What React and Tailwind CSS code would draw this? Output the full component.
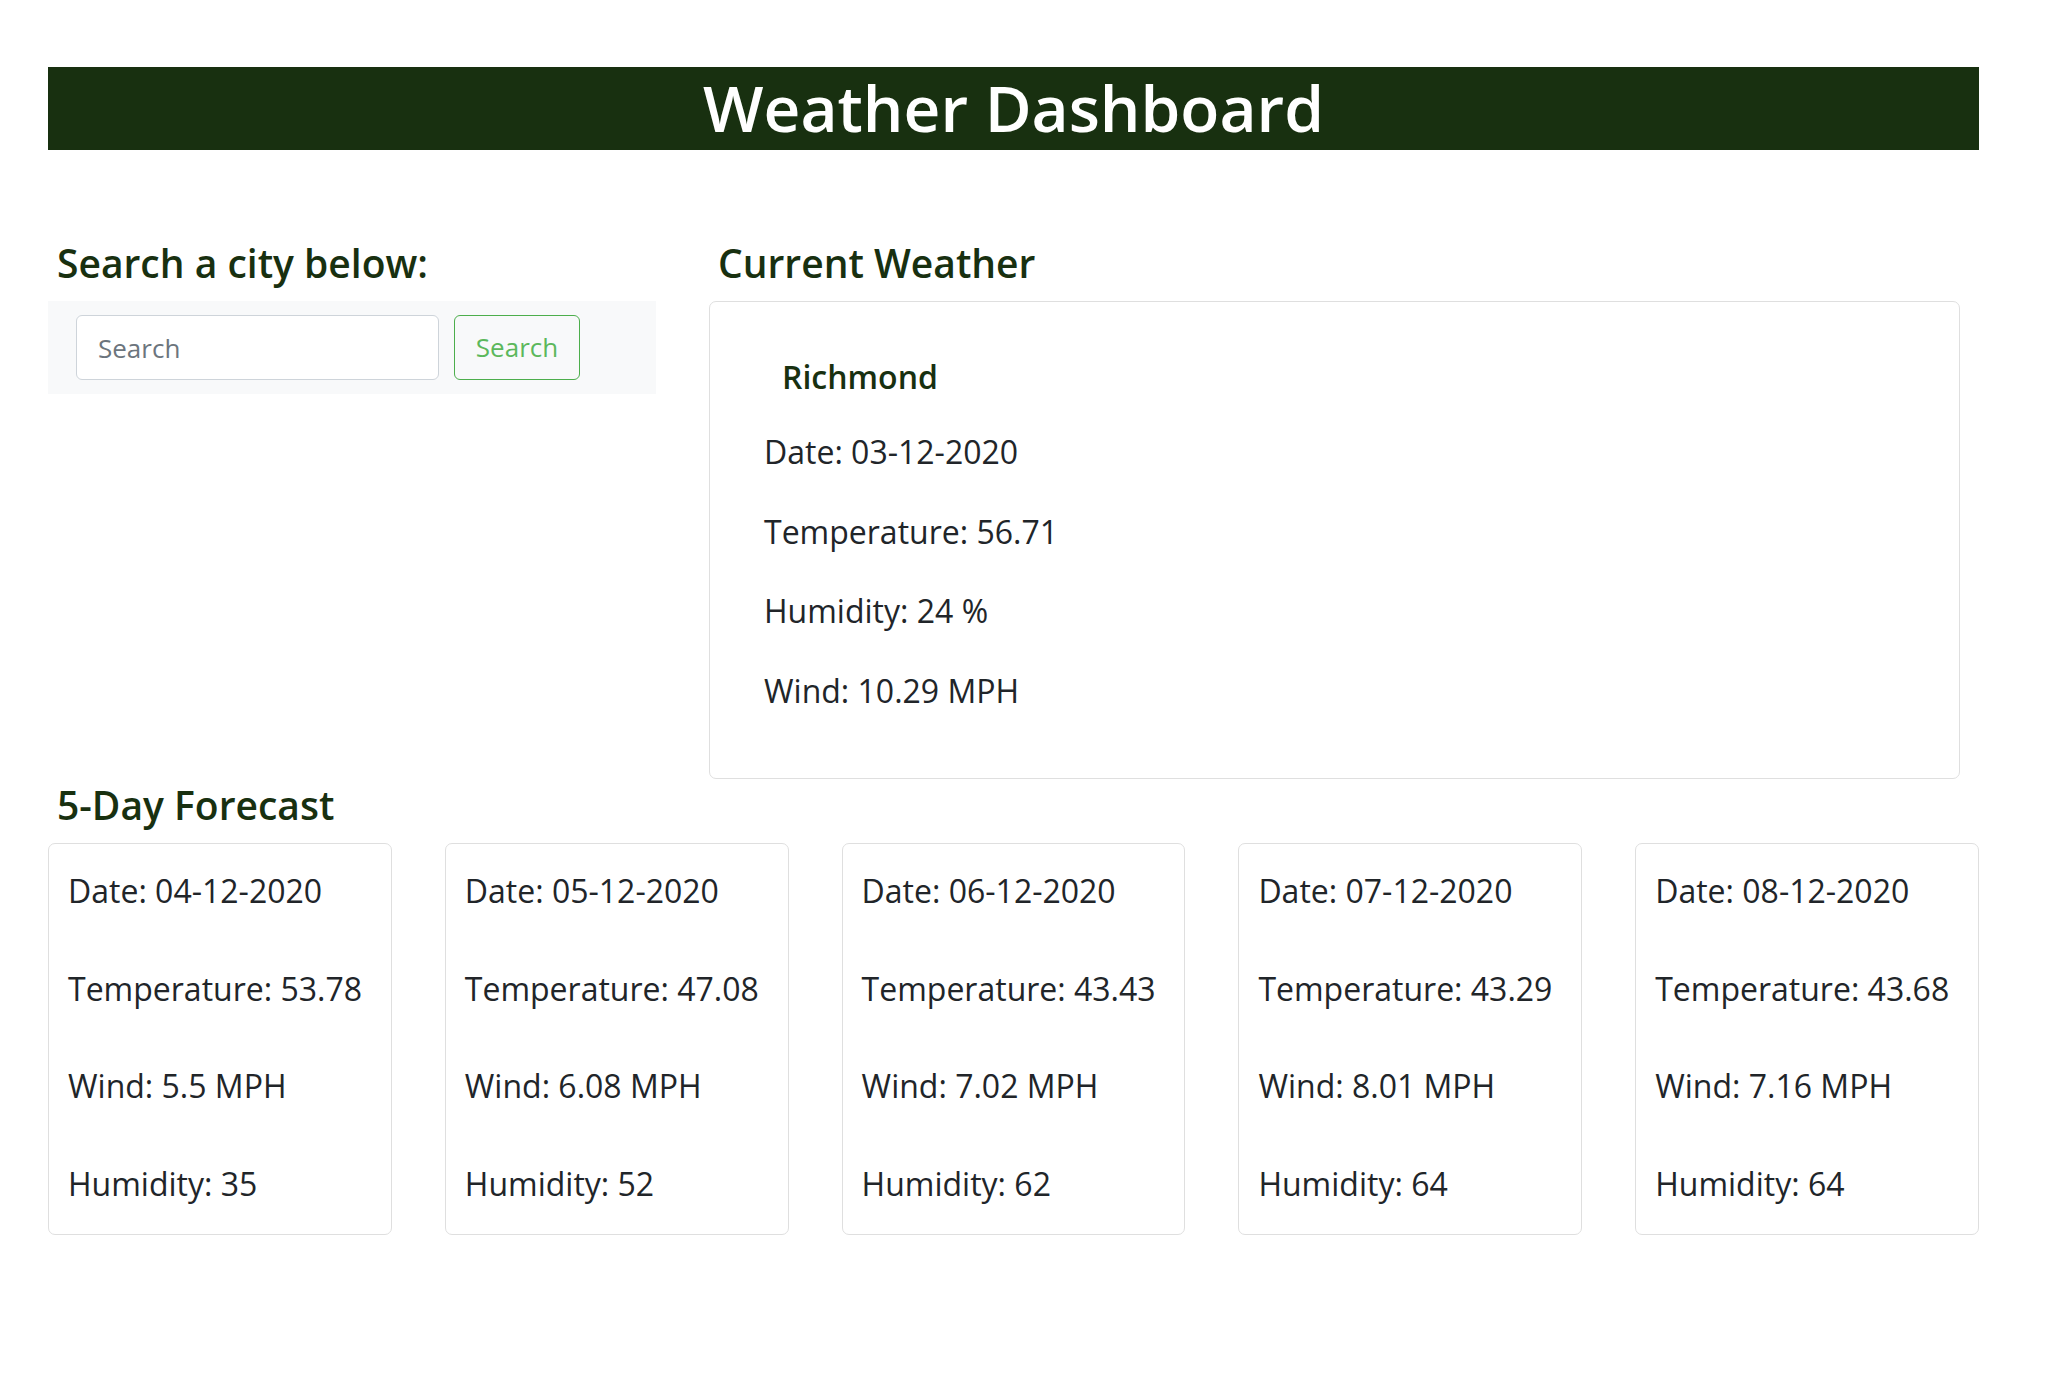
import React from "react";

const forecast = [
  { date: "04-12-2020", temp: "53.78", wind: "5.5", humidity: "35" },
  { date: "05-12-2020", temp: "47.08", wind: "6.08", humidity: "52" },
  { date: "06-12-2020", temp: "43.43", wind: "7.02", humidity: "62" },
  { date: "07-12-2020", temp: "43.29", wind: "8.01", humidity: "64" },
  { date: "08-12-2020", temp: "43.68", wind: "7.16", humidity: "64" },
];

const SectionTitle = ({ children }) => (
  <h2 className="mb-[14px] pl-[9px] text-[39px] font-semibold leading-[48px] text-[#183010]">
    {children}
  </h2>
);

const ForecastCard = ({ day }) => (
  <div className="flex flex-col gap-[48px] rounded-[7px] border border-[#dfdfdf] px-[19px] pt-[22px] pb-[26px] text-[32px] leading-[49.5px]">
    <p>Date: {day.date}</p>
    <p>Temperature: {day.temp}</p>
    <p>Wind: {day.wind} MPH</p>
    <p>Humidity: {day.humidity}</p>
  </div>
);

export default function App() {
  return (
    <div className="min-h-screen bg-white pt-[67px] pl-[48px] font-['Open_Sans',sans-serif] text-[#212529]">
      <div className="w-[1931px]">
        {/* Header */}
        <header className="h-[83px] bg-[#183010] text-center">
          <h1 className="text-[64px] font-semibold leading-[82px] text-white">
            Weather Dashboard
          </h1>
        </header>

        <div className="mt-[89px] flex">
          {/* Search */}
          <section className="w-[608px]">
            <SectionTitle>Search a city below:</SectionTitle>
            <div className="flex h-[93px] items-center gap-[15px] bg-[#f8f9fa] pl-[28px]">
              <input
                type="text"
                placeholder="Search"
                className="h-[65px] w-[363px] rounded-[6px] border border-[#ced4da] bg-white px-[21px] text-[26px] outline-none placeholder:text-[#6c757d]"
              />
              <button className="h-[65px] w-[126px] rounded-[6px] border border-[#4cae4c] text-[26px] text-[#5cb85c]">
                Search
              </button>
            </div>
          </section>

          {/* Current weather */}
          <section className="ml-[53px] w-[1251px]">
            <SectionTitle>Current Weather</SectionTitle>
            <div className="flex flex-col gap-[30px] rounded-[7px] border border-[#dfdfdf] pt-[54px] pb-[63px] pl-[54px] text-[32px] leading-[49.5px]">
              <h3 className="pl-[18px] text-[32px] font-semibold leading-[41px] text-[#183010]">
                Richmond
              </h3>
              <p>Date: 03-12-2020</p>
              <p>Temperature: 56.71</p>
              <p>Humidity: 24 %</p>
              <p>Wind: 10.29 MPH</p>
            </div>
          </section>
        </div>

        {/* Forecast */}
        <section className="mt-[2px]">
          <SectionTitle>5-Day Forecast</SectionTitle>
          <div className="grid grid-cols-5 gap-[53px]">
            {forecast.map((day) => (
              <ForecastCard key={day.date} day={day} />
            ))}
          </div>
        </section>
      </div>
    </div>
  );
}
